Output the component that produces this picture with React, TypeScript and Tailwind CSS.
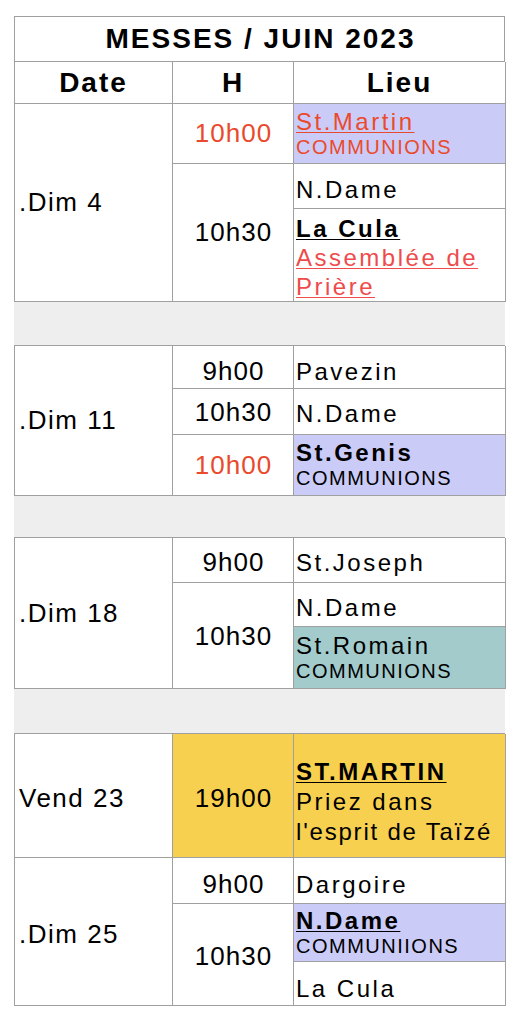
import type { ReactNode } from "react";

const line = "border-[#a0a0a0]";
const red = "text-[#ea4a2c]";

function DateCell({ span, children }: { span: string; children: ReactNode }) {
  return (
    <div className={`${span} flex items-center border-r border-b ${line} pl-[4px] text-[26px] tracking-[1.5px]`}>
      {children}
    </div>
  );
}

function HourCell({ span = "", extra = "", children }: { span?: string; extra?: string; children: ReactNode }) {
  return (
    <div className={`${span} ${extra} flex items-center justify-center border-r border-b ${line} pl-[1px] text-[26px] tracking-[1px]`}>
      {children}
    </div>
  );
}

function PlaceCell({ extra = "", children }: { extra?: string; children: ReactNode }) {
  return (
    <div className={`flex flex-col justify-center border-r border-b ${line} pl-[2px] text-[24px] leading-[27px] tracking-[2.5px] ${extra}`}>
      {children}
    </div>
  );
}

function Sub({ children }: { children: ReactNode }) {
  return <span className="text-[20px] leading-[25px] tracking-[1.5px]">{children}</span>;
}

function Gap({ h }: { h: string }) {
  return <div className={`${h} bg-[#eeeeee]`} />;
}

export default function App() {
  return (
    <div className="min-h-[1024px] bg-white pt-[16px] pl-[14px] font-['Liberation_Sans',Arial,sans-serif] text-black">
      <div className="w-[491px]">
        {/* Title */}
        <div className={`flex h-[46px] items-center justify-center border ${line} pl-[2px] text-[28px] font-bold tracking-[2px]`}>
          MESSES / JUIN 2023
        </div>

        {/* Header */}
        <div className={`grid h-[42px] grid-cols-[158px_121px_212px] border-l border-b ${line} text-[28px] font-bold tracking-[2px]`}>
          <div className={`flex items-center justify-center border-r ${line}`}>Date</div>
          <div className={`flex items-center justify-center border-r ${line}`}>H</div>
          <div className={`flex items-center justify-center border-r ${line}`}>Lieu</div>
        </div>

        {/* Dim 4 */}
        <div className={`grid grid-cols-[158px_121px_212px] grid-rows-[60px_45px_93px] border-l ${line}`}>
          <DateCell span="row-span-3">.Dim 4</DateCell>
          <HourCell extra={red}>10h00</HourCell>
          <PlaceCell extra={`bg-[#cbcbf7] ${red}`}>
            <span className="underline decoration-1 underline-offset-2">St.Martin</span>
            <Sub>COMMUNIONS</Sub>
          </PlaceCell>
          <HourCell span="row-span-2">10h30</HourCell>
          <PlaceCell extra="pt-[6px]">N.Dame</PlaceCell>
          <PlaceCell extra="!justify-start pt-[5px] leading-[29px]">
            <span className="font-bold underline decoration-1 underline-offset-2">La Cula</span>
            <span className="text-[#ee4b4b] underline decoration-1 underline-offset-2">
              Assemblée de
              <br />
              Prière
            </span>
          </PlaceCell>
        </div>

        <Gap h="h-[43px]" />

        {/* Dim 11 */}
        <div className={`grid grid-cols-[158px_121px_212px] grid-rows-[43px_46px_61px] border-l border-t ${line}`}>
          <DateCell span="row-span-3">.Dim 11</DateCell>
          <HourCell extra="pt-[8px]">9h00</HourCell>
          <PlaceCell extra="pt-[8px]">Pavezin</PlaceCell>
          <HourCell extra="pt-[2px]">10h30</HourCell>
          <PlaceCell extra="pt-[4px]">N.Dame</PlaceCell>
          <HourCell extra={red}>10h00</HourCell>
          <PlaceCell extra="bg-[#cbcbf7]">
            <span className="font-bold">St.Genis</span>
            <Sub>COMMUNIONS</Sub>
          </PlaceCell>
        </div>

        <Gap h="h-[41px]" />

        {/* Dim 18 */}
        <div className={`grid grid-cols-[158px_121px_212px] grid-rows-[45px_44px_62px] border-l border-t ${line}`}>
          <DateCell span="row-span-3">.Dim 18</DateCell>
          <HourCell extra="pt-[5px]">9h00</HourCell>
          <PlaceCell extra="pt-[5px]">St.Joseph</PlaceCell>
          <HourCell span="row-span-2" extra="pt-[2px]">10h30</HourCell>
          <PlaceCell extra="pt-[6px]">N.Dame</PlaceCell>
          <PlaceCell extra="bg-[#a3cbcb]">
            <span>St.Romain</span>
            <Sub>COMMUNIONS</Sub>
          </PlaceCell>
        </div>

        <Gap h="h-[44px]" />

        {/* Vend 23 + Dim 25 */}
        <div className={`grid grid-cols-[158px_121px_212px] grid-rows-[124px_46px_58px_44px] border-l border-t ${line}`}>
          <DateCell span="pt-[6px]">Vend 23</DateCell>
          <HourCell extra="bg-[#f8d04f] pt-[6px]">19h00</HourCell>
          <PlaceCell extra="bg-[#f8d04f] pt-[12px] leading-[30px]">
            <span className="font-bold underline decoration-1 underline-offset-2">ST.MARTIN</span>
            <span className="whitespace-nowrap">
              Priez dans
              <br />
              <span className="tracking-[1.8px]">l'esprit de Taïzé</span>
            </span>
          </PlaceCell>

          <DateCell span="row-span-3 pt-[6px]">.Dim 25</DateCell>
          <HourCell extra="pt-[8px]">9h00</HourCell>
          <PlaceCell extra="pt-[8px]">Dargoire</PlaceCell>
          <HourCell span="row-span-2" extra="pt-[4px]">10h30</HourCell>
          <PlaceCell extra="bg-[#cbcbf7] leading-[26px]">
            <span className="font-bold underline decoration-1 underline-offset-2">N.Dame</span>
            <Sub>COMMUNIIONS</Sub>
          </PlaceCell>
          <PlaceCell extra="!justify-end pb-[3px]">La Cula</PlaceCell>
        </div>
      </div>
    </div>
  );
}
